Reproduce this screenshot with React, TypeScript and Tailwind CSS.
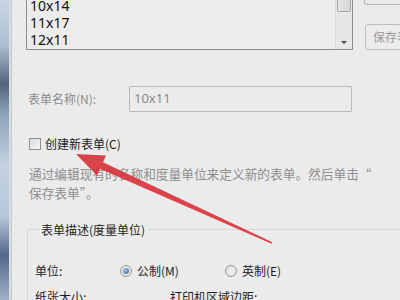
import React from 'react';

const font = { fontFamily: '"Microsoft YaHei", "Noto Sans CJK SC", "Noto Sans", sans-serif' };

const Radio: React.FC<{ checked?: boolean; label: string }> = ({ checked = false, label }) => (
  <div className="flex items-center gap-[5px]">
    <span className="w-[12px] h-[12px] shrink-0 rounded-full border border-[#9a9a9a] bg-[radial-gradient(circle,#f4f4f4,#d9d9d9)] flex items-center justify-center">
      {checked && <span className="w-[6px] h-[6px] rounded-full bg-[radial-gradient(circle_at_35%_35%,#9fc3e4,#2d5f8f)]" />}
    </span>
    <span className="text-[12px] text-[#1e1e1e]">{label}</span>
  </div>
);

const RedArrow = () => (
  <svg className="absolute left-0 top-0 pointer-events-none" width="400" height="300" viewBox="0 0 400 300">
    <polygon
      points="76,154 106,155.5 103,162.3 272.4,242.3 271.6,243.7 100,168.7 97,175.5"
      fill="#d8343b"
      opacity="0.92"
    />
  </svg>
);

export default function App() {
  return (
    <div className="relative w-[400px] h-[300px] overflow-hidden flex bg-[#ebebeb]" style={font}>
      <div className="w-[9px] shrink-0 bg-[linear-gradient(to_bottom,#c9d6e4_0%,#aebfd2_15%,#52647c_28%,#8ea3bb_38%,#c3d1e0_55%,#b7c7da_72%,#55688a_85%,#9fb1c7_100%)]" />
      <div className="w-[3px] shrink-0 bg-[#d9dde2] border-r border-[#c7c9cc]" />
      <div className="flex-1 min-w-0 flex flex-col pl-[14px]">
        {/* list + side buttons */}
        <div className="flex h-[50px]">
          <div className="w-[327px] shrink-0 h-[50px] flex border-x border-b border-[#8b8c8d] bg-[#ececec]">
            <div className="flex-1 -mt-[3px] pl-[3px] text-[14px] leading-[17px] text-[#111]" style={{ fontFamily: '"Noto Sans", sans-serif' }}>
              <div>10x14</div>
              <div>11x17</div>
              <div>12x11</div>
            </div>
            <div className="w-[17px] flex flex-col border-l border-[#dcdcdc] bg-[#e7e7e7]">
              <div className="h-[12px] mx-[1px] rounded-b-[2px] border border-t-0 border-[#a9a9a9] bg-[linear-gradient(to_right,#e6e6e6,#d4d4d4)]" />
              <div className="flex-1" />
              <div className="h-[14px] flex items-center justify-center">
                <span className="w-0 h-0 border-x-[3px] border-x-transparent border-t-[3px] border-t-[#444]" />
              </div>
            </div>
          </div>
          <div className="ml-[11px] shrink-0 flex flex-col">
            <div className="h-[6px] -mt-[1px] w-[50px] rounded-b-[3px] border border-t-0 border-[#b5b5b5] bg-[#e9e9e9]" />
            <div className="mt-[19px] ml-[1px] h-[27px] w-[50px] rounded-[3px] border border-[#bdbdbd] bg-[#ececec] pl-[7px] flex items-center text-[12px] text-[#9a9a9a] whitespace-nowrap overflow-hidden">
              保存表单
            </div>
          </div>
        </div>

        {/* name row */}
        <div className="mt-[36px] flex items-center">
          <span className="w-[103px] shrink-0 pl-[2px] text-[12px] text-[#8c8c8c]">表单名称(N):</span>
          <div className="w-[223px] shrink-0 h-[26px] border border-[#b9b9b9] rounded-[1px] flex items-center pl-[4px] text-[13px] text-[#8a8a8a]" style={{ fontFamily: '"Noto Sans", sans-serif' }}>
            10x11
          </div>
        </div>

        {/* checkbox row */}
        <div className="mt-[26px] h-[12px] flex items-center">
          <span className="ml-[3px] w-[12px] h-[12px] shrink-0 border border-[#8f8f8f] bg-[linear-gradient(135deg,#dcdcdc,#f5f5f5)]" />
          <span className="ml-[4px] text-[12px] text-[#1a1a1a]">创建新表单(C)</span>
        </div>

        {/* description */}
        <div className="mt-[14px] pl-[3px] text-[12.7px] leading-[19px] text-[#8e8e8e] whitespace-nowrap">
          <div>通过编辑现有的名称和度量单位来定义新的表单。然后单击“</div>
          <div>保存表单”。</div>
        </div>

        {/* group box */}
        <fieldset className="mt-[19px] ml-[1px] -mr-[8px] border border-[#d3d8dc] rounded-[3px] pl-[7px] pb-[20px]">
          <legend className="ml-[4px] px-[2px] text-[12px] leading-[17px] text-[#1e1e1e]">表单描述(度量单位)</legend>
          <div className="mt-[24px] flex items-center">
            <span className="w-[85px] shrink-0 text-[12px] text-[#1e1e1e]">单位:</span>
            <div className="w-[105px] shrink-0">
              <Radio checked label="公制(M)" />
            </div>
            <Radio label="英制(E)" />
          </div>
          <div className="mt-[8px] flex items-center">
            <span className="w-[135px] shrink-0 text-[12px] text-[#1e1e1e]">纸张大小:</span>
            <span className="text-[12px] text-[#1e1e1e]">打印机区域边距:</span>
          </div>
        </fieldset>
      </div>
      <RedArrow />
    </div>
  );
}
